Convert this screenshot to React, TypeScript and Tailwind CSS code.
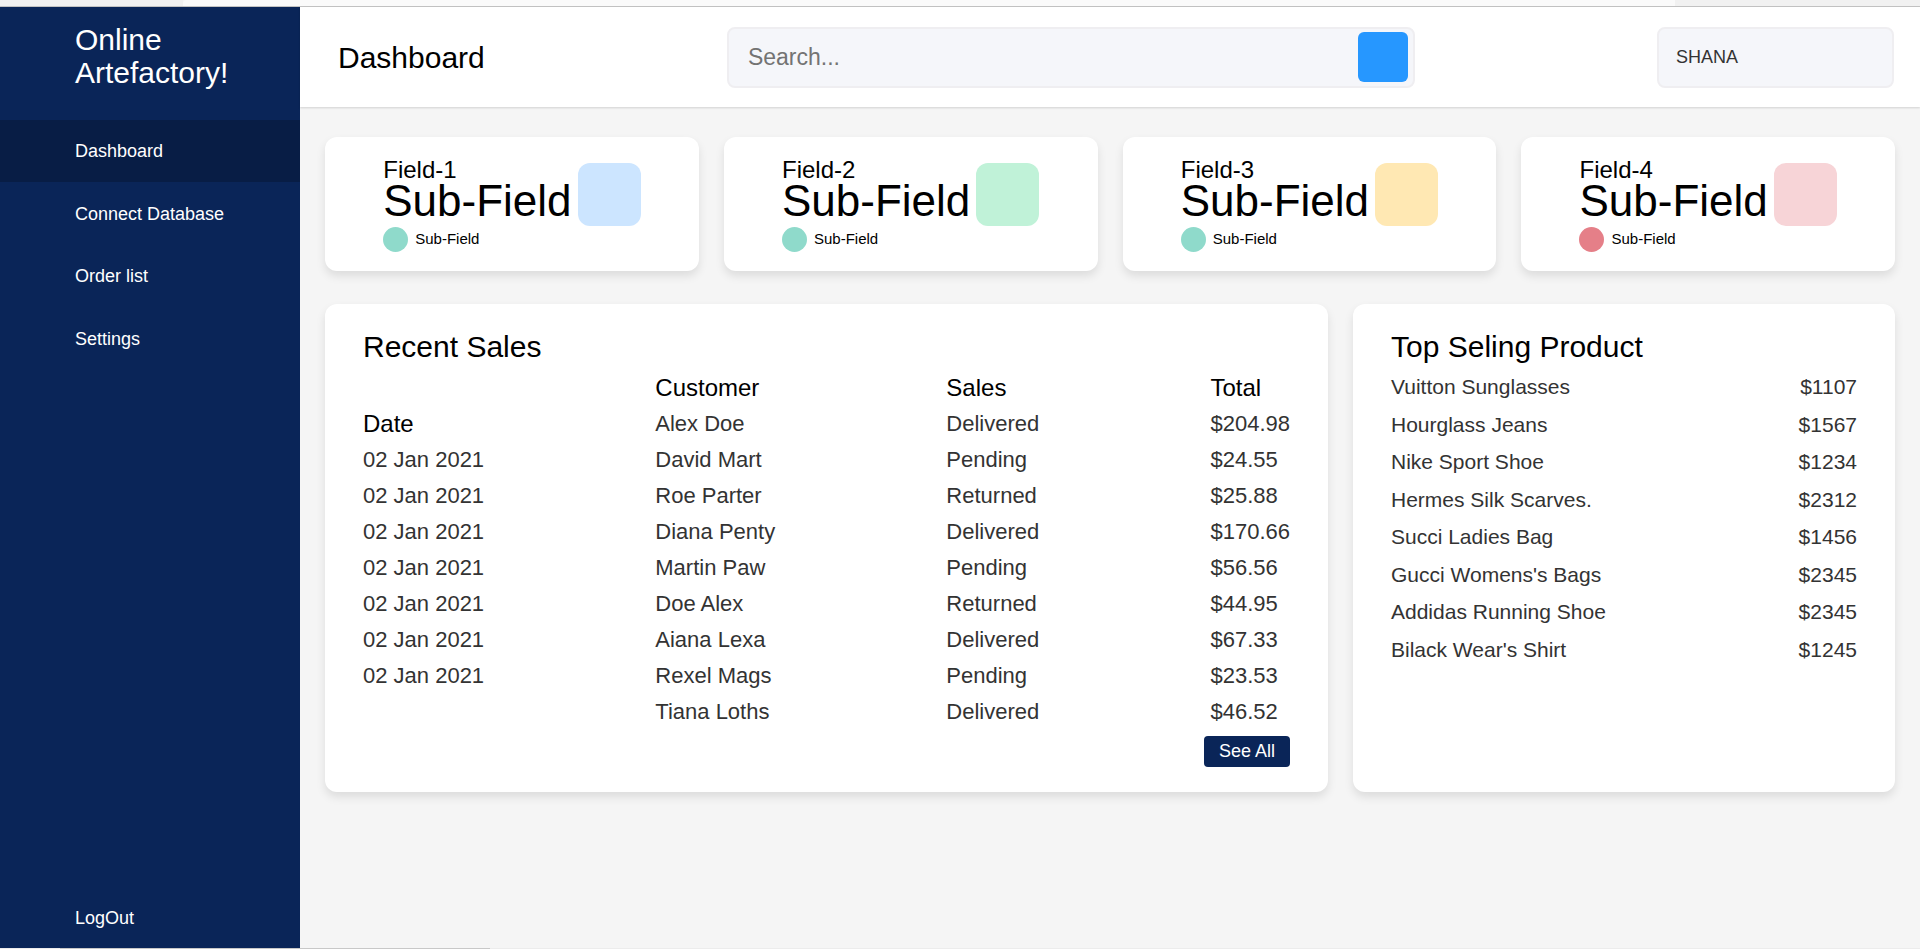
import React from "react";

const cards = [
  { f: "Field-1", box: "bg-[#cce5ff]", dot: "bg-[#8fdacb]" },
  { f: "Field-2", box: "bg-[#c0f2d8]", dot: "bg-[#8fdacb]" },
  { f: "Field-3", box: "bg-[#ffe8b3]", dot: "bg-[#8fdacb]" },
  { f: "Field-4", box: "bg-[#f7d4d7]", dot: "bg-[#e57f88]" },
];

const dates = Array(7).fill("02 Jan 2021");
const customers = [
  "Alex Doe",
  "David Mart",
  "Roe Parter",
  "Diana Penty",
  "Martin Paw",
  "Doe Alex",
  "Aiana Lexa",
  "Rexel Mags",
  "Tiana Loths",
];
const sales = [
  "Delivered",
  "Pending",
  "Returned",
  "Delivered",
  "Pending",
  "Returned",
  "Delivered",
  "Pending",
  "Delivered",
];
const totals = [
  "$204.98",
  "$24.55",
  "$25.88",
  "$170.66",
  "$56.56",
  "$44.95",
  "$67.33",
  "$23.53",
  "$46.52",
];

const products: [string, string][] = [
  ["Vuitton Sunglasses", "$1107"],
  ["Hourglass Jeans", "$1567"],
  ["Nike Sport Shoe", "$1234"],
  ["Hermes Silk Scarves.", "$2312"],
  ["Succi Ladies Bag", "$1456"],
  ["Gucci Womens's Bags", "$2345"],
  ["Addidas Running Shoe", "$2345"],
  ["Bilack Wear's Shirt", "$1245"],
];

function Column({ title, items }: { title: string; items: string[] }) {
  return (
    <div className="flex flex-col">
      <div className="text-[24px] leading-[36px] h-[36px] text-black whitespace-nowrap">{title}</div>
      {items.map((t, i) => (
        <div key={i} className="text-[22px] leading-[36px] h-[36px] text-[#333] whitespace-nowrap">
          {t}
        </div>
      ))}
    </div>
  );
}

export default function App() {
  const nav = ["Dashboard", "Connect Database", "Order list", "Settings"];
  return (
    <div className="w-full h-[949px] overflow-hidden flex flex-col bg-[#f5f5f5] font-['Liberation_Sans',Arial,sans-serif]">
      {/* top strip */}
      <div className="h-[6px] flex">
        <div className="w-[183px] bg-[#f1f1f1]" />
        <div className="w-[1492px] bg-[#fafafa] rounded-tl-[4px]" />
        <div className="flex-1 bg-[#f1f1f1]" />
      </div>
      <div className="h-px bg-[#c3c3c3]" />

      <div className="flex h-[941px]">
        {/* sidebar */}
        <aside className="w-[300px] bg-[#0a2558] text-white flex flex-col">
          <div className="h-[113px] pt-[16px] pl-[75px] text-[30px] leading-[33px]">
            Online
            <br />
            Artefactory!
          </div>
          {nav.map((n, i) => (
            <div
              key={n}
              className={`h-[62px] flex items-center pl-[75px] text-[18px] pt-[1px] ${i === 0 ? "bg-[#081d45]" : "mt-[0.5px]"}`}
            >
              {n}
            </div>
          ))}
          <div className="flex-1" />
          <div className="h-[60px] flex items-center pl-[75px] text-[18px]">LogOut</div>
        </aside>

        {/* right */}
        <div className="flex-1 flex flex-col">
          <header className="h-[100px] bg-white flex items-center justify-between pl-[38px] pr-[26px] shadow-[0_1px_2px_rgba(0,0,0,0.15)] relative z-10">
            <div className="text-[30px] text-black">Dashboard</div>
            <div className="w-[688px] h-[61px] bg-[#f5f6fa] border-2 border-[#efeef1] rounded-[8px] flex items-center pl-[19px] pr-[5px]">
              <input
                className="flex-1 bg-transparent outline-none text-[23px] text-[#333] placeholder:text-[#737373]"
                placeholder="Search..."
              />
              <div className="w-[50px] h-[50px] bg-[#2697ff] rounded-[6px]" />
            </div>
            <div className="w-[237px] h-[61px] bg-[#f5f6fa] border-2 border-[#efeef1] rounded-[8px] flex items-center pl-[17px] text-[18px] text-[#333]">
              SHANA
            </div>
          </header>

          <main className="flex-1 px-[25px] pt-[30px]">
            <div className="grid grid-cols-4 gap-[25px]">
              {cards.map((c) => (
                <div
                  key={c.f}
                  className="h-[134px] bg-white rounded-[12px] shadow-[0_5px_10px_rgba(0,0,0,0.1)] flex justify-center items-start pt-[19px]"
                >
                  <div className="flex flex-col text-black">
                    <div className="text-[24px] leading-[27px]">{c.f}</div>
                    <div className="text-[44px] leading-[35px] whitespace-nowrap">Sub-Field</div>
                    <div className="mt-[9px] flex items-center gap-[7px]">
                      <div className={`w-[25px] h-[25px] rounded-full ${c.dot}`} />
                      <span className="text-[15px]">Sub-Field</span>
                    </div>
                  </div>
                  <div className={`ml-[6px] mt-[7px] w-[63px] h-[63px] rounded-[12px] ${c.box}`} />
                </div>
              ))}
            </div>

            <div className="mt-[33px] flex gap-[25px]">
              <div className="w-[1003px] h-[488px] bg-white rounded-[12px] shadow-[0_5px_10px_rgba(0,0,0,0.1)] px-[38px] pt-[26px]">
                <div className="text-[30px] leading-[33px] text-black">Recent Sales</div>
                <div className="mt-[7px] h-[360px] flex justify-between items-center">
                  <Column title="Date" items={dates} />
                  <Column title="Customer" items={customers} />
                  <Column title="Sales" items={sales} />
                  <Column title="Total" items={totals} />
                </div>
                <div className="mt-[6px] flex justify-end">
                  <button className="h-[31px] px-[15px] rounded-[4px] bg-[#0a2558] text-white text-[18px] leading-[31px]">
                    See All
                  </button>
                </div>
              </div>

              <div className="flex-1 h-[488px] bg-white rounded-[12px] shadow-[0_5px_10px_rgba(0,0,0,0.1)] px-[38px] pt-[26px]">
                <div className="text-[30px] leading-[33px] text-black">Top Seling Product</div>
                <ul className="mt-[5px]">
                  {products.map(([n, p]) => (
                    <li key={n} className="flex justify-between text-[21px] leading-[37.5px] text-[#333]">
                      <span>{n}</span>
                      <span>{p}</span>
                    </li>
                  ))}
                </ul>
              </div>
            </div>
          </main>
        </div>
      </div>

      <div className="h-px bg-[#ececec] flex">
        <div className="ml-[60px] w-[430px] bg-[#c8c8c8]" />
      </div>
    </div>
  );
}
